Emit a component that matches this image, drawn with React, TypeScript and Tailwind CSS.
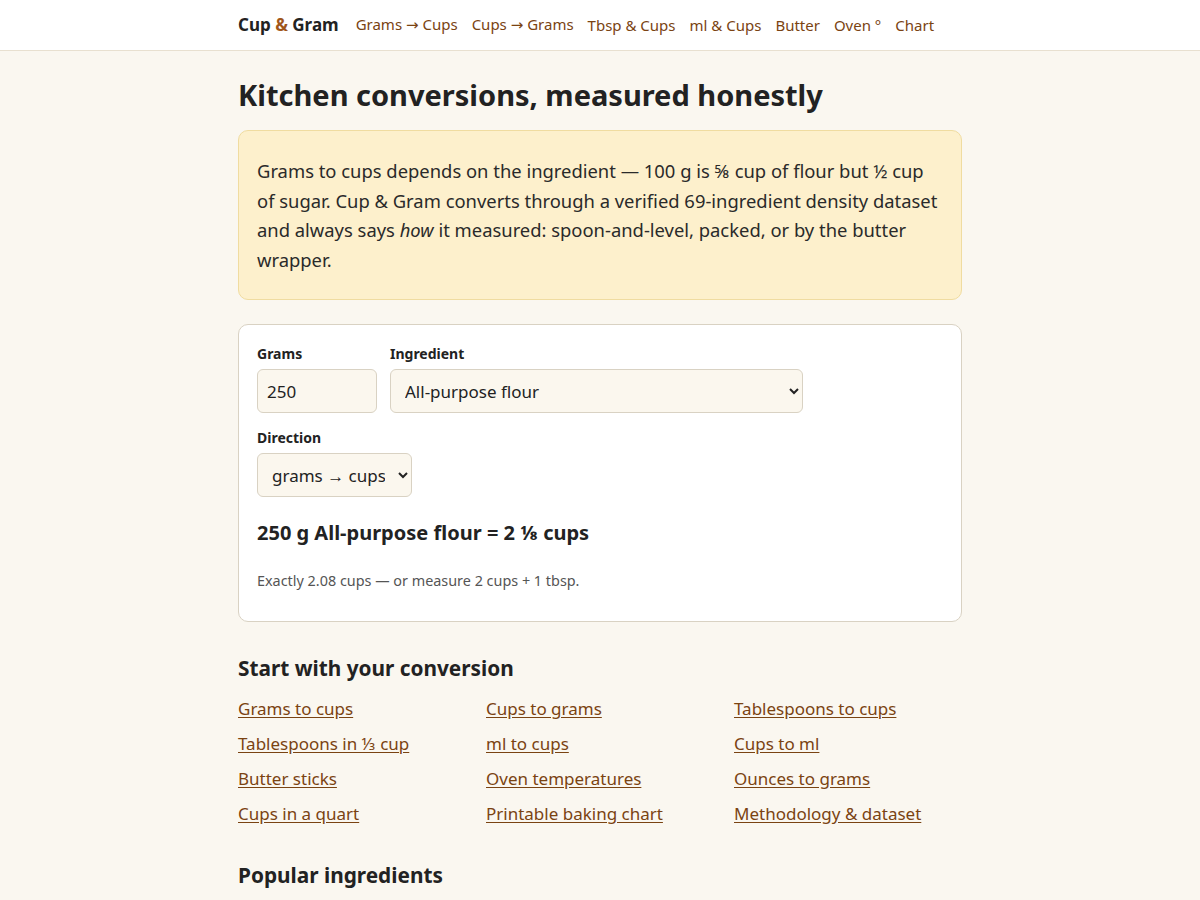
const Arrow = () => <span className="font-['DejaVu_Sans',sans-serif]">→</span>

const navLinks = [
  <>Grams <Arrow /> Cups</>,
  <>Cups <Arrow /> Grams</>,
  'Tbsp & Cups',
  'ml & Cups',
  'Butter',
  'Oven °',
  'Chart',
]

const conversions = [
  'Grams to cups',
  'Cups to grams',
  'Tablespoons to cups',
  'Tablespoons in ⅓ cup',
  'ml to cups',
  'Cups to ml',
  'Butter sticks',
  'Oven temperatures',
  'Ounces to grams',
  'Cups in a quart',
  'Printable baking chart',
  'Methodology & dataset',
]

export default function App() {
  return (
    <div className="min-h-[900px] bg-[#faf7f0] text-[#222] font-['Noto_Sans',sans-serif]">
      {/* header */}
      <header className="h-[51px] border-b border-[#e8e0d0] bg-white">
        <div className="mx-auto flex h-full w-[724px] items-center gap-[14px]">
          <a href="#" className="mr-[3px] text-[17px] font-bold text-[#222]">
            Cup <span className="text-[#a0561a]">&amp;</span> Gram
          </a>
          {navLinks.map((label, i) => (
            <a key={i} href="#" className="text-[15px] text-[#7a4312]">
              {label}
            </a>
          ))}
        </div>
      </header>

      <main className="mx-auto w-[724px] pt-[22px]">
        <h1 className="text-[29px] font-bold leading-[44px] text-[#222]">Kitchen conversions, measured honestly</h1>

        <div className="mt-[13px] rounded-[10px] border border-[#f0dca0] bg-[#fdf0cc] px-[18px] pt-[25px] pb-[25px] text-[18.4px] leading-[29.5px] text-[#2a2a2a]">
          Grams to cups depends on the ingredient — 100 g is ⅝ cup of flour but ½ cup of sugar. Cup &amp; Gram converts
          through a verified 69-ingredient density dataset and always says <em>how</em> it measured: spoon-and-level,
          packed, or by the butter wrapper.
        </div>

        {/* converter */}
        <section className="mt-[24px] rounded-[10px] border border-[#d9d2c3] bg-white px-[18px] pt-[19px] pb-[30px]">
          <div className="flex gap-[13px]">
            <label className="block">
              <span className="block text-[14px] font-bold leading-[20px]">Grams</span>
              <input
                defaultValue="250"
                className="mt-[5px] h-[44px] w-[120px] rounded-[6px] border border-[#d9d2c3] bg-[#fbf7ee] px-[9px] text-[17px] outline-none"
              />
            </label>
            <label className="block">
              <span className="block text-[14px] font-bold leading-[20px]">Ingredient</span>
              <select className="mt-[5px] h-[44px] w-[413px] rounded-[6px] border border-[#d9d2c3] bg-[#fbf7ee] px-[10px] text-[17px] outline-none">
                <option>All-purpose flour</option>
              </select>
            </label>
          </div>
          <label className="mt-[15px] block">
            <span className="block text-[14px] font-bold leading-[20px]">Direction</span>
            <select className="mt-[5px] h-[44px] w-[155px] rounded-[6px] border border-[#d9d2c3] bg-[#fbf7ee] px-[10px] text-[17px] outline-none">
              <option>grams → cups</option>
            </select>
          </label>
          <p className="mt-[20px] text-[20px] font-bold leading-[32px]">250 g All-purpose flour = 2 ⅛ cups</p>
          <p className="mt-[22px] text-[14.4px] leading-[20px] text-[#555]">Exactly 2.08 cups — or measure 2 cups + 1 tbsp.</p>
        </section>

        <h2 className="mt-[31px] text-[20.8px] font-bold leading-[30px]">Start with your conversion</h2>
        <div className="mt-[14px] grid grid-cols-3 gap-x-5 gap-y-[11px]">
          {conversions.map((label) => (
            <a key={label} href="#" className="justify-self-start text-[17px] leading-[24px] text-[#7a4312] underline underline-offset-2">
              {label}
            </a>
          ))}
        </div>

        <h2 className="mt-[34px] text-[20.8px] font-bold leading-[30px]">Popular ingredients</h2>
      </main>
    </div>
  )
}
